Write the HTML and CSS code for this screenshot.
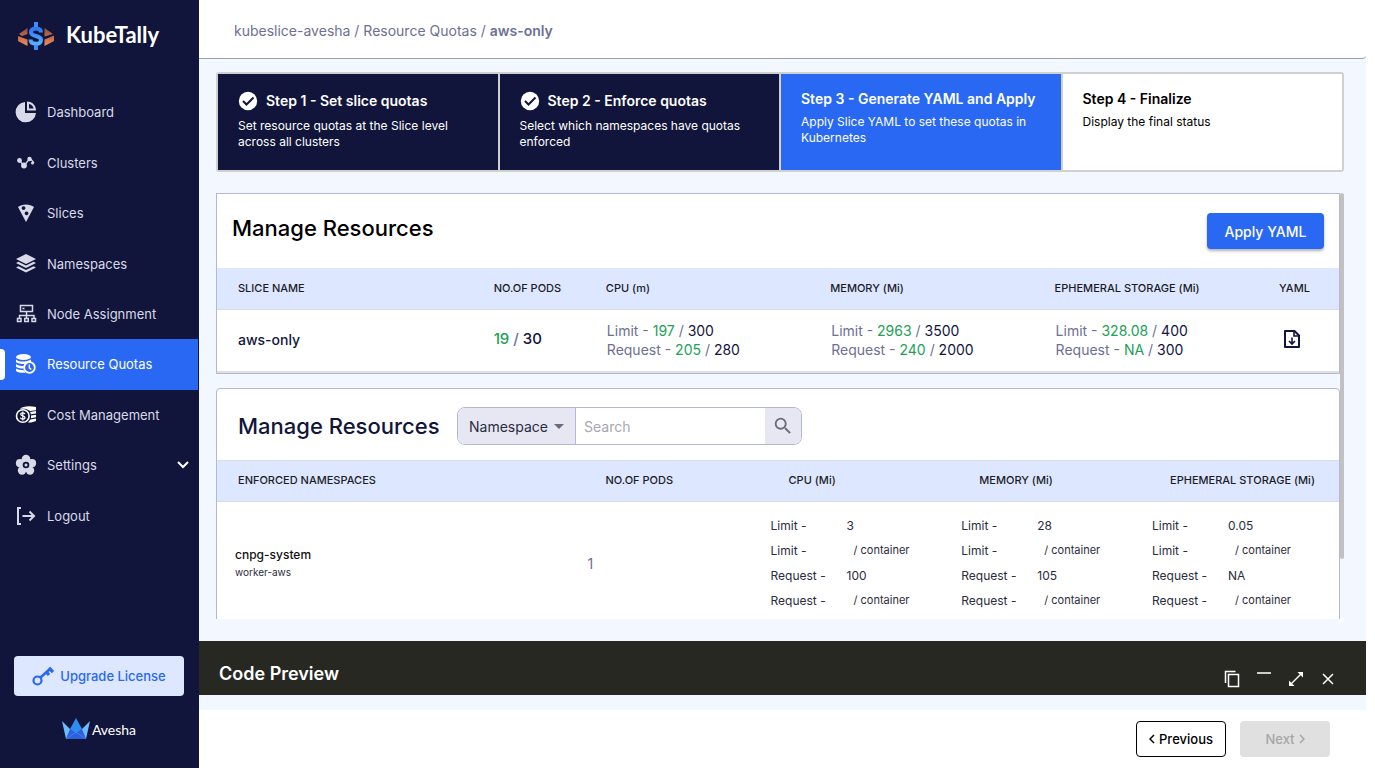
FILE: index.html
```html
<!DOCTYPE html>
<html lang="en">
<head>
    <meta charset="UTF-8">
    <meta name="viewport" content="width=device-width, initial-scale=1.0">
    <title>KubeTally - Resource Quotas</title>
    <link rel="stylesheet" href="styles.css">
</head>
<body>
    <!-- Sidebar -->
    <aside class="sidebar">
        <a class="brand" href="#">
            <svg width="38" height="30" viewBox="0 0 38 30">
                <defs>
                    <linearGradient id="copper" gradientUnits="userSpaceOnUse" x1="0" y1="6" x2="0" y2="25">
                        <stop offset="0" stop-color="#8a4a35"/>
                        <stop offset="1" stop-color="#f58c5c"/>
                    </linearGradient>
                    <linearGradient id="dollar" x1="0" y1="0" x2="0" y2="1">
                        <stop offset="0" stop-color="#2f78f5"/>
                        <stop offset="1" stop-color="#55b0ff"/>
                    </linearGradient>
                </defs>
                <path fill="url(#copper)" d="M2 13l8.500-6v6L5 15zM1 15l9.500 3.500V25L1 20zM36 13l-8.500-6v8.500zM37 14.500l-9.500 4V25l9.500-5z"/>
                <path fill="none" stroke="url(#dollar)" stroke-width="4" d="M24 11.500c0-3-2-4-5-4s-5 1.200-5 3.700c0 5 10 2.700 10 7.500 0 2.600-2 4-5 4s-5.500-1.200-5.500-4.200"/>
                <path fill="#3f8dfa" d="M17 1h4v5h-4zM17 24h4v5h-4z"/>
            </svg>
            <span>KubeTally</span>
        </a>

        <nav class="menu">
            <a href="#">
                <svg width="22" height="22" viewBox="0 0 22 22" fill="currentColor">
                    <path d="M10 1v11h11A10.200 10.200 0 1 1 10 1z"/>
                    <path fill-rule="evenodd" d="M12 0.500c5.500 0 9 4 9 9h-9zM14 3v4.600h4.600C18 5 16.500 3.500 14 3z"/>
                </svg>
                Dashboard
            </a>
            <a href="#">
                <svg width="22" height="22" viewBox="0 0 22 22" fill="currentColor">
                    <path d="M5 9l4 5 6-8 4 5" fill="none" stroke="currentColor" stroke-width="1.300"/>
                    <circle cx="4.500" cy="8.500" r="2.400"/><circle cx="9" cy="13.500" r="2.900"/>
                    <circle cx="14.500" cy="7" r="2.200"/><circle cx="17.500" cy="11" r="1.500"/>
                </svg>
                Clusters
            </a>
            <a href="#">
                <svg width="22" height="22" viewBox="0 0 22 22" fill="currentColor">
                    <path fill-rule="evenodd" d="M3 5c4-3.500 12-3.500 16 0l-8 15zM8.500 4.200a1.900 1.900 0 1 0 .1 0zM11.500 9.500a1.900 1.900 0 1 0 .1 0z"/>
                </svg>
                Slices
            </a>
            <a href="#">
                <svg width="22" height="22" viewBox="0 0 22 22" fill="currentColor">
                    <path d="M11 1l10 5-10 5L1 6z"/>
                    <path d="M1 10l2.500-1.200L11 12.500l7.500-3.700L21 10l-10 5zM1 14.500l2.500-1.200L11 17l7.500-3.700L21 14.500l-10 5z"/>
                </svg>
                Namespaces
            </a>
            <a href="#">
                <svg width="22" height="22" viewBox="0 0 22 22" fill="none" stroke="currentColor" stroke-width="1.500">
                    <path d="M5.500 2.500h12v6h-12zM11.500 8.500v7M4.500 15.500v-3h14.500v3M2.500 15.500h3.500v3H2.500zM9.700 15.500h3.600v3H9.700zM17 15.500h3.500v3H17zM7.500 5.500h2"/>
                </svg>
                Node Assignment
            </a>
            <a class="active" href="#">
                <svg width="22" height="22" viewBox="0 0 22 22" fill="currentColor">
                    <ellipse cx="8.500" cy="4" rx="7.500" ry="3"/>
                    <path d="M1 6.500c2 2.500 10 3 15 0v2.300c-3 0-5 1-6 2.200-4 0-8-.5-9-2zM1 11c1.500 1.500 4.500 2 7.800 2v2.500C5 15.500 2 15 1 13.500zM1 15.500c2 1.300 4.500 1.700 8 1.700l1.500 2.500C6 20 2 19.500 1 17.700z"/>
                    <circle cx="14.500" cy="14.500" r="5.300" fill="none" stroke="currentColor" stroke-width="1.800"/>
                    <path d="M14.300 11.500v3.400l2 1.600" fill="none" stroke="currentColor" stroke-width="1.400"/>
                </svg>
                Resource Quotas
            </a>
            <a href="#">
                <svg width="22" height="22" viewBox="0 0 22 22" fill="#fff">
                    <path d="M5 5c2-3 10-3.500 16-2v3.200l-6 .8C12 4.500 8 4.500 5 5zM15 8l6-1v2.500l-5 .7zM16 11.500l5-.8v2.600l-5 .9zM15.500 15.500l5.500-1v2.500c-2 1-5 1.700-8 1.500z"/>
                    <circle cx="7.800" cy="12" r="6.300" fill="none" stroke="#fff" stroke-width="1.600"/>
                    <path d="M10 10.200c-.3-1-1-1.400-2.200-1.400-1.300 0-2.100.5-2.100 1.500 0 2.100 4.300 1 4.300 3.300 0 1-.9 1.600-2.200 1.600s-2.200-.5-2.300-1.600M7.800 7.500v9" fill="none" stroke="#fff" stroke-width="1.200"/>
                </svg>
                Cost Management
            </a>
            <a href="#">
                <svg width="22" height="22" viewBox="0 0 22 22">
                    <g fill="currentColor">
                        <circle cx="11" cy="5" r="4.300"/><circle cx="17" cy="9.200" r="4.100"/>
                        <circle cx="15" cy="16.500" r="4.200"/><circle cx="7" cy="16.500" r="4.200"/>
                        <circle cx="5" cy="9.200" r="4.100"/><circle cx="11" cy="11" r="6"/>
                    </g>
                    <circle cx="11" cy="11" r="2.400" fill="none" stroke="#12153b" stroke-width="1.800"/>
                </svg>
                Settings
                <svg class="chevron" width="12" height="8" viewBox="0 0 12 8" fill="none" stroke="#fff" stroke-width="2">
                    <path d="M1 1l5 5 5-5"/>
                </svg>
            </a>
            <a href="#">
                <svg width="22" height="22" viewBox="0 0 22 22" fill="none" stroke="currentColor" stroke-width="2">
                    <path d="M6 3H3v16h3M7.500 11h11M14.500 6.500L19 11l-4.500 4.500"/>
                </svg>
                Logout
            </a>
        </nav>

        <div class="sidebar-footer">
            <button class="upgrade" type="button">
                <svg width="22" height="22" viewBox="0 0 22 22" fill="none" stroke="currentColor">
                    <circle cx="5.500" cy="15.500" r="4" stroke-width="2.200"/>
                    <path d="M8.500 12.500L19 3" stroke-width="2.500"/>
                    <path d="M14 6.500l3 3.500M17 3l4 4" stroke-width="3.200"/>
                </svg>
                Upgrade License
            </button>
            <a class="avesha" href="#">
                <svg width="28" height="22" viewBox="0 0 28 22">
                    <path fill="#6cbcff" d="M0 3l9 9-5 9zM28 3l-9 9 5 9z"/>
                    <path fill="#2f8cf0" d="M14 0l6 11-6 6-6-6z"/>
                    <path fill="#2b62dc" d="M8 11l6 4 6-4 4 10H4z"/>
                    <path fill="none" stroke="#5a9cff" stroke-width="0.500" d="M4 21l10-7 10 7"/>
                </svg>
                <span>Avesha</span>
            </a>
        </div>
    </aside>

    <div class="main">
        <header class="topbar">
            <nav class="breadcrumb">
                <a href="#">kubeslice-avesha</a> / <a href="#">Resource Quotas</a> / <b>aws-only</b>
            </nav>
        </header>

        <main class="content">
            <!-- Stepper -->
            <ol class="steps">
                <li class="step done">
                    <h2>
                        <svg width="20" height="20" viewBox="0 0 20 20">
                            <circle cx="10" cy="10" r="9.200" fill="#fff"/>
                            <path d="M5 10l3.500 3.500 7-7" fill="none" stroke="#12153b" stroke-width="2"/>
                        </svg>
                        Step 1 - Set slice quotas
                    </h2>
                    <p>Set resource quotas at the Slice level across all clusters</p>
                </li>
                <li class="step done">
                    <h2>
                        <svg width="20" height="20" viewBox="0 0 20 20">
                            <circle cx="10" cy="10" r="9.200" fill="#fff"/>
                            <path d="M5 10l3.500 3.500 7-7" fill="none" stroke="#12153b" stroke-width="2"/>
                        </svg>
                        Step 2 - Enforce quotas
                    </h2>
                    <p>Select which namespaces have quotas enforced</p>
                </li>
                <li class="step current">
                    <h2>Step 3 - Generate YAML and Apply</h2>
                    <p>Apply Slice YAML to set these quotas in Kubernetes</p>
                </li>
                <li class="step">
                    <h2>Step 4 - Finalize</h2>
                    <p>Display the final status</p>
                </li>
            </ol>

            <div class="scroll-area">
                <div class="scroll-body">
                    <!-- Slice quotas -->
                    <section class="card slice-card">
                        <div class="card-head">
                            <h3>Manage Resources</h3>
                            <button class="btn-primary" type="button">Apply YAML</button>
                        </div>
                        <table class="slice-table">
                            <thead>
                                <tr>
                                    <th class="col-name">SLICE NAME</th>
                                    <th class="col-pods">NO.OF PODS</th>
                                    <th class="col-res">CPU (m)</th>
                                    <th class="col-res">MEMORY (Mi)</th>
                                    <th class="col-res">EPHEMERAL STORAGE (Mi)</th>
                                    <th class="col-yaml">YAML</th>
                                </tr>
                            </thead>
                            <tbody>
                                <tr>
                                    <td class="name">aws-only</td>
                                    <td class="pods"><span class="used">19</span> <i>/</i> 30</td>
                                    <td>
                                        <p>Limit - <span class="used">197</span> / <span class="total">300</span></p>
                                        <p>Request - <span class="used">205</span> / <span class="total">280</span></p>
                                    </td>
                                    <td>
                                        <p>Limit - <span class="used">2963</span> / <span class="total">3500</span></p>
                                        <p>Request - <span class="used">240</span> / <span class="total">2000</span></p>
                                    </td>
                                    <td>
                                        <p>Limit - <span class="used">328.08</span> / <span class="total">400</span></p>
                                        <p>Request - <span class="used">NA</span> / <span class="total">300</span></p>
                                    </td>
                                    <td class="yaml">
                                        <button class="icon-btn" type="button" aria-label="Download YAML">
                                            <svg width="24" height="24" viewBox="0 0 24 24" fill="none" stroke="#12153b" stroke-width="2">
                                                <path d="M5 4h9.500l4.500 4.500V20H5z" stroke-linejoin="round"/>
                                                <path d="M14 4v5h5M12 10.500V17M9 14l3 3 3-3" stroke-width="1.600"/>
                                            </svg>
                                        </button>
                                    </td>
                                </tr>
                            </tbody>
                        </table>
                    </section>

                    <!-- Namespace quotas -->
                    <section class="card ns-card">
                        <div class="card-head">
                            <h3>Manage Resources</h3>
                            <form class="search">
                                <label class="search-by">
                                    <select aria-label="Search by">
                                        <option>Namespace</option>
                                        <option>Cluster</option>
                                    </select>
                                </label>
                                <input type="text" placeholder="Search" aria-label="Search">
                                <button type="button" aria-label="Search">
                                    <svg width="22" height="22" viewBox="0 0 24 24" fill="#6b6b73">
                                        <path d="M15.500 14h-.79l-.28-.27A6.470 6.470 0 0 0 16 9.500 6.500 6.500 0 1 0 9.500 16c1.610 0 3.090-.59 4.230-1.570l.27.28v.79l5 4.990L20.490 19l-4.990-5zm-6 0C7.010 14 5 11.990 5 9.500S7.010 5 9.500 5 14 7.010 14 9.500 11.990 14 9.500 14z"/>
                                    </svg>
                                </button>
                            </form>
                        </div>
                        <table class="ns-table">
                            <thead>
                                <tr>
                                    <th class="ns-name">ENFORCED NAMESPACES</th>
                                    <th class="ns-pods">NO.OF PODS</th>
                                    <th class="ns-res">CPU (Mi)</th>
                                    <th class="ns-res">MEMORY (Mi)</th>
                                    <th>EPHEMERAL STORAGE (Mi)</th>
                                </tr>
                            </thead>
                            <tbody>
                                <tr>
                                    <td>
                                        <b>cnpg-system</b>
                                        <small>worker-aws</small>
                                    </td>
                                    <td class="count">1</td>
                                    <td>
                                        <dl>
                                            <dt>Limit -</dt><dd>3</dd>
                                            <dt>Limit -</dt><dd class="unit">/ container</dd>
                                            <dt>Request -</dt><dd>100</dd>
                                            <dt>Request -</dt><dd class="unit">/ container</dd>
                                        </dl>
                                    </td>
                                    <td>
                                        <dl>
                                            <dt>Limit -</dt><dd>28</dd>
                                            <dt>Limit -</dt><dd class="unit">/ container</dd>
                                            <dt>Request -</dt><dd>105</dd>
                                            <dt>Request -</dt><dd class="unit">/ container</dd>
                                        </dl>
                                    </td>
                                    <td>
                                        <dl>
                                            <dt>Limit -</dt><dd>0.05</dd>
                                            <dt>Limit -</dt><dd class="unit">/ container</dd>
                                            <dt>Request -</dt><dd>NA</dd>
                                            <dt>Request -</dt><dd class="unit">/ container</dd>
                                        </dl>
                                    </td>
                                </tr>
                            </tbody>
                        </table>
                    </section>
                </div>
                <div class="scroll-track"><div class="scroll-thumb"></div></div>
            </div>
        </main>

        <section class="code-preview">
            <h2>Code Preview</h2>
            <div class="tools">
                <button type="button" aria-label="Copy">
                    <svg width="18" height="18" viewBox="0 0 18 18" fill="none" stroke="#fff" stroke-width="1.500">
                        <path d="M5.500 4.500h10v12h-10zM2.500 13V1.500h10"/>
                    </svg>
                </button>
                <button type="button" aria-label="Minimize">
                    <svg width="18" height="18" viewBox="0 0 18 18" stroke="#ccc" stroke-width="2">
                        <path d="M2 3h14"/>
                    </svg>
                </button>
                <button type="button" aria-label="Expand">
                    <svg width="18" height="18" viewBox="0 0 18 18" fill="#fff" stroke="#fff" stroke-width="1.500">
                        <path d="M4 14L14 4"/>
                        <path stroke="none" d="M10.500 2H16v5.500zM2 10.500V16h5.500z"/>
                    </svg>
                </button>
                <button type="button" aria-label="Close">
                    <svg width="18" height="18" viewBox="0 0 18 18" stroke="#fff" stroke-width="1.500">
                        <path d="M4 4l10 10M14 4L4 14"/>
                    </svg>
                </button>
            </div>
        </section>

        <footer class="pager">
            <button class="prev" type="button">
                <svg width="6" height="10" viewBox="0 0 6 10" fill="none" stroke="currentColor" stroke-width="1.500"><path d="M5 1L1 5l4 4"/></svg>
                Previous
            </button>
            <button class="next" type="button" disabled>
                Next
                <svg width="6" height="10" viewBox="0 0 6 10" fill="none" stroke="currentColor" stroke-width="1.500"><path d="M1 1l4 4-4 4"/></svg>
            </button>
        </footer>
    </div>
</body>
</html>
```
FILE: styles.css
```css
/* General */
* {
    box-sizing: border-box;
}

body {
    font-family: Inter, "Liberation Sans", sans-serif;
    font-size: 13px;
    margin: 0;
    padding: 0 9px 14px 0;
    height: 100vh;
    display: flex;
    background: #fff;
    color: #12153b;
}

h2, h3, p, ol, dl, dd {
    margin: 0;
    padding: 0;
}

a {
    color: inherit;
    text-decoration: none;
}

button, input, select {
    font-family: inherit;
    font-size: 13px;
    cursor: pointer;
}

/* Sidebar */
.sidebar {
    width: 199px;
    flex-shrink: 0;
    background: #12153b;
    display: flex;
    flex-direction: column;
}

.brand {
    height: 87px;
    padding: 21px 0 0 17px;
    display: flex;
    align-items: flex-start;
    gap: 11px;
    color: #fff;
    font-family: Lato, sans-serif;
    font-size: 22px;
    line-height: 28px;
    font-weight: 700;
}

.menu {
    height: 454px;
    display: flex;
    flex-direction: column;
}

.menu a {
    flex: 1;
    display: flex;
    align-items: center;
    gap: 10px;
    padding: 0 9px 0 15px;
    margin-right: 1px;
    color: #d9dae8;
    position: relative;
}

.menu a.active {
    background: #2968f3;
    color: #fff;
}

.menu a.active::before {
    content: "";
    position: absolute;
    left: 0;
    top: 10px;
    width: 5px;
    height: 31px;
    background: #fff;
    border-radius: 0 4px 4px 0;
}

.chevron {
    margin-left: auto;
}

.sidebar-footer {
    margin-top: auto;
    padding: 0 15px 28px 14px;
    display: flex;
    flex-direction: column;
    align-items: center;
    gap: 22px;
}

.upgrade {
    width: 100%;
    height: 40px;
    border: none;
    border-radius: 4px;
    background: #dde7ff;
    color: #2968f3;
    font-weight: 500;
    display: flex;
    align-items: center;
    justify-content: center;
    gap: 6px;
    padding: 0;
}

.avesha {
    display: flex;
    align-items: center;
    gap: 2px;
    color: #fff;
    font-family: Lato, sans-serif;
    font-size: 14px;
}

/* Main column */
.main {
    flex: 1;
    min-width: 0;
    display: flex;
    flex-direction: column;
    background: #f3f7ff;
}

.topbar {
    height: 59px;
    flex-shrink: 0;
    background: #fff;
    border-bottom: 1px solid #9c9ea8;
    border-bottom-right-radius: 4px;
    padding: 21px 35px;
}

.breadcrumb {
    font-size: 14px;
    line-height: 20px;
    color: #6d7093;
}

.breadcrumb b {
    font-weight: 600;
}

.content {
    flex: 1;
    min-height: 0;
    padding: 13px 22px 19px 17px;
    display: flex;
    flex-direction: column;
    gap: 21px;
}

/* Stepper */
.steps {
    list-style: none;
    display: grid;
    grid-template-columns: repeat(4, 1fr);
    gap: 2px;
    background: #d0d0d0;
    border: 2px solid #d0d0d0;
    border-radius: 3px;
    flex-shrink: 0;
}

.step {
    height: 96px;
    padding: 15px 20px;
    background: #fff;
    color: #000;
}

.step h2 {
    font-size: 14px;
    line-height: 20px;
    font-weight: 600;
    display: flex;
    align-items: center;
    gap: 8px;
    white-space: nowrap;
}

.step p {
    font-size: 12px;
    line-height: 16px;
    margin-top: 5px;
}

.step.done {
    background: #12153b;
    color: #fff;
    padding-top: 17px;
}

.step.done p {
    margin-top: 7px;
}

.step.current {
    background: #2968f3;
    color: #fff;
}

/* Scrolling list of cards */
.scroll-area {
    flex: 1;
    min-height: 0;
    display: flex;
}

.scroll-body {
    flex: 1;
    min-width: 0;
    margin-bottom: 3px;
    overflow-y: auto;
    scrollbar-width: none;
}

.scroll-track {
    width: 4px;
    border-bottom: 4px solid #fff;
}

.scroll-thumb {
    height: 86%;
    background: #c1c1c1;
    border-radius: 2px;
}

.card {
    background: #fff;
    border: 1px solid #b5b7d8;
}

.card + .card {
    margin-top: 14px;
    border-radius: 4px;
}

.card-head {
    display: flex;
    align-items: center;
}

.card h3 {
    font-size: 22px;
    line-height: 28px;
    font-weight: 500;
}

.slice-card .card-head {
    height: 74px;
    padding: 0 15px;
    justify-content: space-between;
}

.slice-card h3 {
    color: #000;
    margin-bottom: 6px;
}

.ns-card .card-head {
    height: 71px;
    padding: 3px 21px 0;
}

.ns-card h3 {
    min-width: 219px;
}

.btn-primary {
    width: 117px;
    height: 36px;
    border: none;
    border-radius: 4px;
    background: #2968f3;
    color: #fff;
    font-size: 14px;
    font-weight: 500;
    box-shadow: 0 2px 3px rgba(0, 0, 0, 0.3);
}

table {
    width: 100%;
    border-collapse: separate;
    border-spacing: 0;
    table-layout: fixed;
}

th {
    height: 42px;
    padding: 0 0 2px 21px;
    text-align: left;
    font-size: 11px;
    font-weight: 500;
    color: #1c1c28;
    background: #dde7ff;
    border-bottom: 1px solid #dcdde3;
    white-space: nowrap;
}

.col-pods {
    width: 10%;
}

.col-res {
    width: 20%;
}

.col-yaml {
    width: 81px;
}

.slice-table td {
    height: 63px;
    padding: 0 0 2px 22px;
    border-bottom: 2px solid #dfdfdf;
    font-size: 14px;
    line-height: 19px;
    color: #6d7093;
}

.slice-table td.name,
.slice-table td.pods {
    padding-left: 21px;
    font-weight: 500;
    color: #12153b;
}

.slice-table td.pods {
    padding-bottom: 4px;
    font-size: 15px;
}

.slice-table td.yaml {
    padding-bottom: 0;
}

.pods i {
    font-style: normal;
    color: #6d7093;
}

.used {
    color: #21a156;
}

.total {
    color: #12153b;
}

.icon-btn {
    border: none;
    background: none;
    padding: 0;
    display: block;
}

/* Search box */
.search {
    display: flex;
    width: 345px;
    height: 38px;
    border: 1px solid #b5b7d8;
    border-radius: 8px;
    overflow: hidden;
}

.search-by {
    width: 118px;
    background: #e6e7f3;
    border-right: 1px solid #b5b7d8;
    display: flex;
    align-items: center;
    padding: 0 11px;
}

.search-by::after {
    content: "";
    border: 5px solid transparent;
    border-top-color: #6b6b73;
    border-bottom: none;
}

.search select {
    appearance: none;
    border: none;
    background: none;
    padding: 0;
    flex: 1;
    min-width: 0;
    font-size: 14px;
    color: #2b2c3d;
}

.search input {
    flex: 1;
    min-width: 0;
    border: none;
    outline: none;
    padding: 0 8px;
    font-size: 14px;
}

.search input::placeholder {
    color: #a8a8ae;
}

.search button {
    width: 36px;
    border: none;
    background: #e6e7f3;
    padding: 0;
    display: flex;
    align-items: center;
    justify-content: center;
}

/* Namespace table */
.ns-table th {
    padding-left: 36px;
    border-top: 1px solid #dcdde3;
}

.ns-table th.ns-name {
    padding-left: 21px;
}

.ns-pods {
    width: 183px;
}

.ns-res {
    width: 17%;
}

.ns-table th:last-child {
    width: 205px;
}

.ns-table td {
    padding: 11px 0 11px 18px;
    color: #2b2c3d;
}

.ns-table td b {
    display: block;
    font-size: 12px;
    line-height: 18px;
    font-weight: 500;
    color: #111;
}

.ns-table small {
    font-size: 10px;
    line-height: 16px;
    display: block;
}

.ns-table td.count {
    font-size: 14px;
    color: #6d7093;
}

.ns-table dl {
    display: grid;
    grid-template-columns: 76px 1fr;
    font-size: 12px;
    line-height: 25px;
}

.ns-table .unit {
    font-size: 11px;
    padding-left: 7px;
}

/* Code preview bar */
.code-preview {
    height: 54px;
    flex-shrink: 0;
    margin-bottom: 15px;
    padding: 6px 29px 0 20px;
    background: #272822;
    color: #fff;
    display: flex;
    align-items: center;
    justify-content: space-between;
}

.code-preview h2 {
    font-size: 18px;
    line-height: 24px;
    font-weight: 600;
    padding-top: 6px;
}

.tools {
    display: flex;
    gap: 14px;
    padding-top: 16px;
}

.tools button {
    border: none;
    background: none;
    padding: 0;
    height: 18px;
}

/* Footer buttons */
.pager {
    height: 58px;
    flex-shrink: 0;
    background: #fff;
    padding: 0 36px;
    display: flex;
    align-items: center;
    justify-content: flex-end;
    gap: 14px;
}

.pager button {
    width: 90px;
    height: 36px;
    border-radius: 4px;
    font-weight: 500;
    padding: 0;
    display: flex;
    align-items: center;
    justify-content: center;
    gap: 4px;
}

.prev {
    border: 1px solid #000;
    background: #fff;
    color: #000;
}

.next {
    border: none;
    background: #e0e0e0;
    color: #a6a6a6;
}
```
